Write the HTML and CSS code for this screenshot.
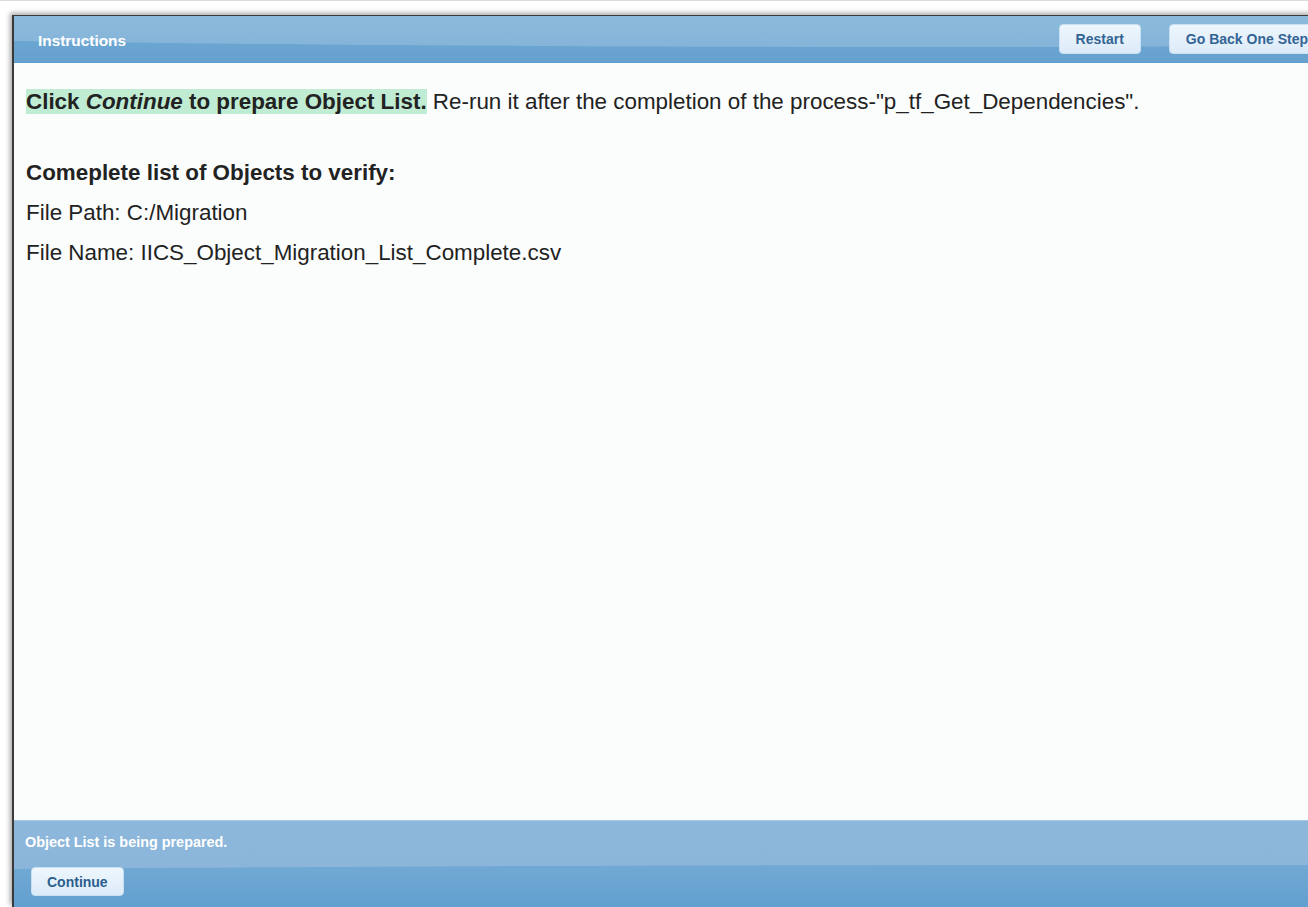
FILE: index.html
```html
<!DOCTYPE html>
<html>
<head>
<meta charset="utf-8">
<title>Instructions</title>
<link rel="stylesheet" href="styles.css">
</head>
<body>
<div class="page">
  <div class="window">
    <header class="head">
      <span class="title">Instructions</span>
      <div class="actions">
        <button class="btn">Restart</button>
        <button class="btn">Go Back One Step</button>
      </div>
    </header>
    <main class="content">
      <p class="lead"><span class="mark">Click <em>Continue</em> to prepare Object List.</span> Re-run it after the completion of the process-"p_tf_Get_Dependencies".</p>
      <p class="subhead">Comeplete list of Objects to verify:</p>
      <p class="line">File Path: C:/Migration</p>
      <p class="line">File Name: IICS_Object_Migration_List_Complete.csv</p>
    </main>
    <footer class="foot">
      <div class="status">Object List is being prepared.</div>
      <button class="btn btn-continue">Continue</button>
    </footer>
  </div>
</div>
</body>
</html>
```

FILE: styles.css
```css
html, body {
  margin: 0;
  padding: 0;
}
body {
  background: #ffffff;
  height: 907px;
  overflow: hidden;
  font-family: "Liberation Sans", Arial, sans-serif;
  border-top: 1px solid #dcdcdc;
  box-sizing: border-box;
}
.page {
  padding: 14px 0 0 12px;
}
.window {
  width: 1330px;
  height: 892px;
  box-sizing: border-box;
  border-top: 1px solid #3a3a3a;
  border-left: 2px solid #3a3a3a;
  box-shadow: -2px -2px 5px rgba(0, 0, 0, 0.35);
  display: flex;
  flex-direction: column;
  background: #fbfdfd;
}
.head {
  position: relative;
  overflow: hidden;
  height: 46px;
  flex: none;
  border-bottom: 1px solid #5d9cd4;
  background: linear-gradient(#70a9d4, #67a2cf);
  display: flex;
  align-items: center;
  padding: 0 17px 0 24px;
}
.head::before {
  content: "";
  position: absolute;
  left: -800px;
  width: 3400px;
  top: -58px;
  height: 89px;
  border-radius: 0 0 1700px 1700px / 0 0 40px 40px;
  background: linear-gradient(rgba(255, 255, 255, 0.22), rgba(255, 255, 255, 0.18));
}
.title {
  position: relative;
  color: #ffffff;
  font-weight: bold;
  font-size: 15.4px;
  padding-top: 4px;
}
.actions {
  position: relative;
  margin-left: auto;
  display: flex;
  gap: 28px;
}
.btn {
  font-family: "Liberation Sans", Arial, sans-serif;
  font-weight: bold;
  font-size: 14px;
  color: #336494;
  height: 30px;
  padding: 0 16px;
  border: 1px solid #c9dff2;
  border-radius: 4px;
  background: linear-gradient(#eef6fd, #dcebf9);
  cursor: pointer;
}
.content {
  flex: 1;
  padding: 26px 12px 0 12px;
  color: #222222;
  font-size: 22.4px;
  line-height: 25px;
}
.content p {
  margin: 0;
}
.mark {
  background: #bfecd3;
  font-weight: bold;
}
.mark em {
  font-style: italic;
}
.subhead {
  font-weight: bold;
  margin-top: 46px !important;
}
.line {
  margin-top: 15px !important;
}
.foot {
  position: relative;
  overflow: hidden;
  flex: none;
  height: 86px;
  border-top: 1px solid #a6c8e5;
  background: linear-gradient(#8db7db, #89b4d9);
  padding: 0 0 0 11px;
}
.foot::after {
  content: "";
  position: absolute;
  left: -600px;
  width: 3400px;
  top: 44px;
  height: 120px;
  border-radius: 1700px 1700px 0 0 / 17px 17px 0 0;
  background: linear-gradient(#72a9d4, #63a0cf 40px);
}
.status {
  position: relative;
  z-index: 1;
  color: #ffffff;
  font-weight: bold;
  font-size: 14.4px;
  line-height: 18px;
  padding-top: 12px;
}
.btn-continue {
  position: relative;
  z-index: 1;
  margin: 16px 0 0 6px;
  height: 29px;
  padding: 0 15px;
  color: #2b5e8e;
}
```
